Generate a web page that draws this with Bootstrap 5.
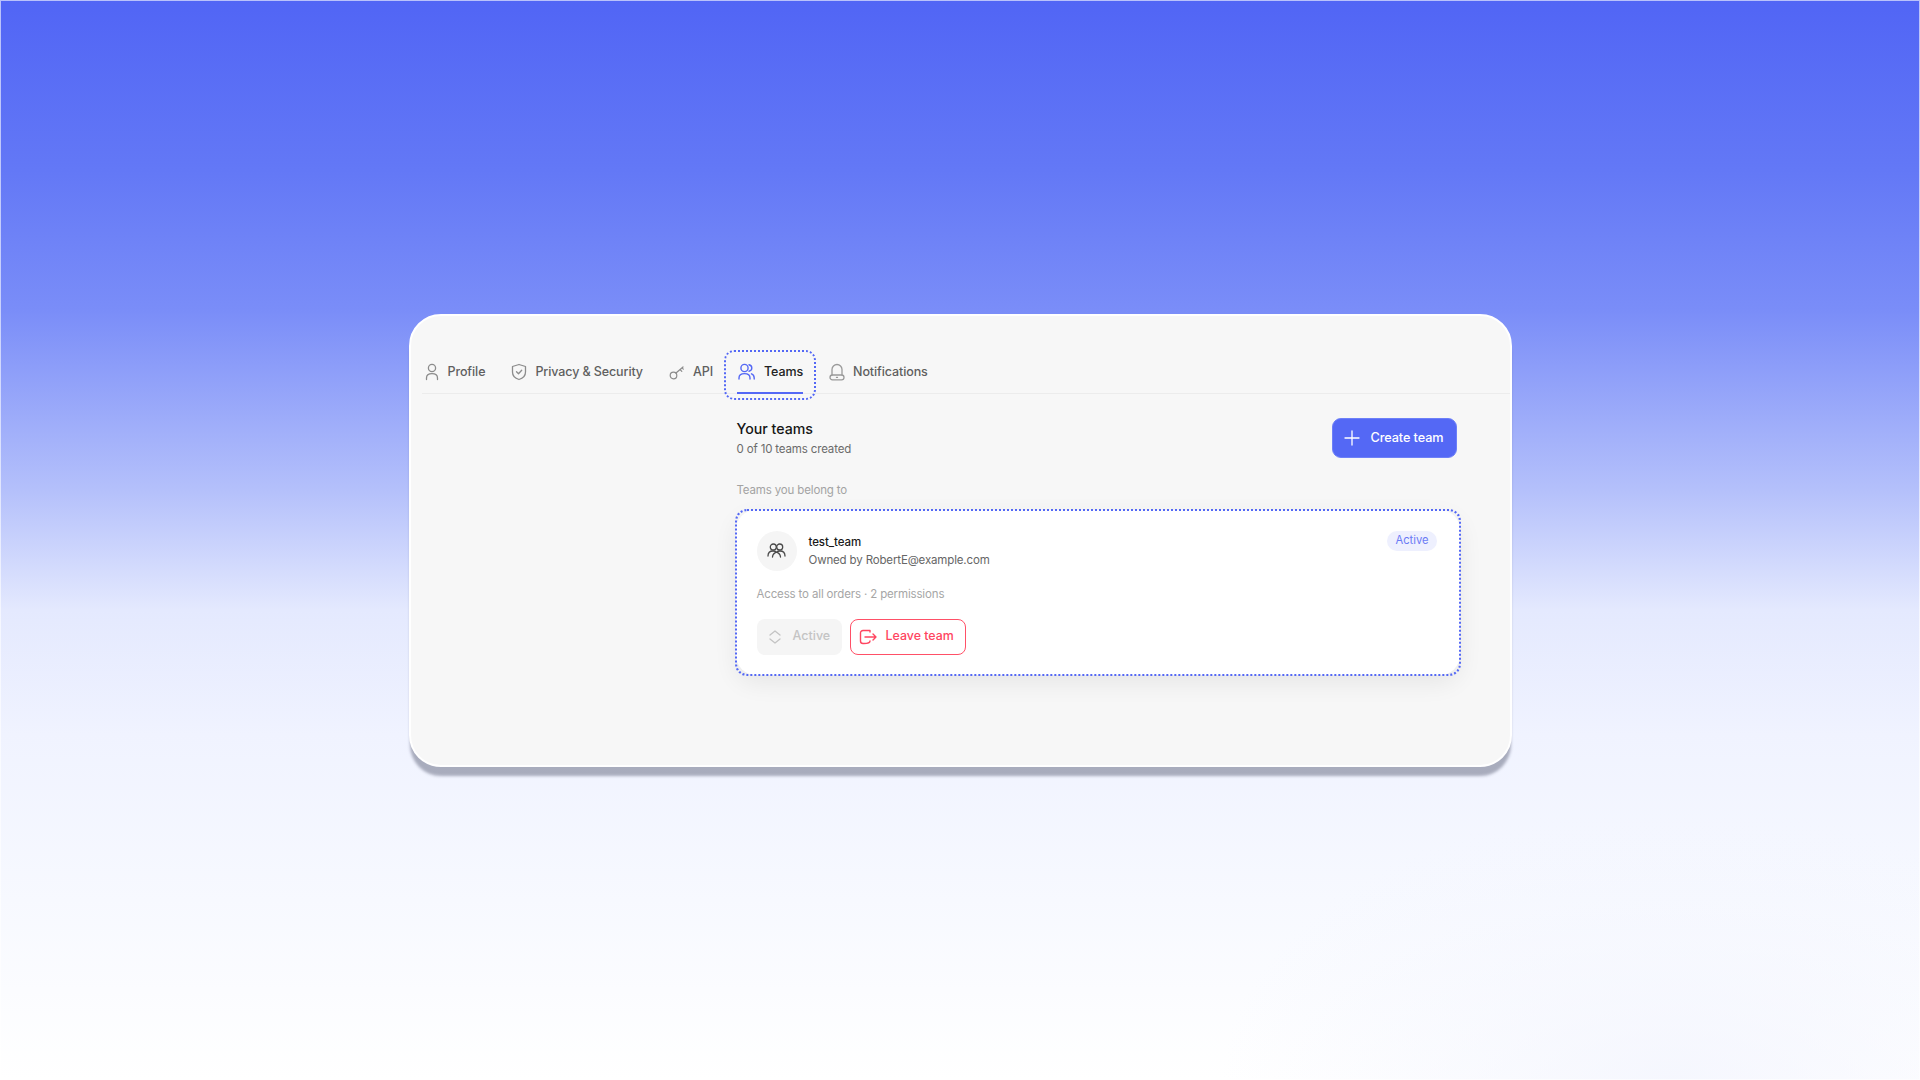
<!DOCTYPE html>
<html lang="en">
<head>
    <meta charset="UTF-8">
    <meta name="viewport" content="width=device-width, initial-scale=1.0">
    <title>Teams settings</title>
    <link href="https://cdn.jsdelivr.net/npm/bootstrap@5.3.0/dist/css/bootstrap.min.css" rel="stylesheet">
    <style>
        html, body { height: 100%; }
        body {
            font-family: Inter, "Noto Sans", sans-serif;
            background:
                radial-gradient(ellipse 450px 280px at 1672px 1080px, rgba(243, 245, 254, .8), rgba(243, 245, 254, 0)),
                linear-gradient(180deg, #5165f5 0px, #6378f6 170px, #7a8df8 310px, #b4c0fb 490px, #e4e9fe 610px, #f0f3ff 735px, #f7f9ff 900px, #ffffff 1080px);
            background-origin: border-box;
            border: 1px solid rgba(255, 255, 255, .6);
            overflow: hidden;
        }
        .page-wrap { padding-top: 313px; }
        .settings-panel {
            width: 1103px;
            height: 453px;
            background: #f7f7f7;
            border: 2px solid #fff;
            border-radius: 32px;
            box-shadow: 0 10px 3px -1px rgba(60, 64, 90, .4);
        }
        .tab-row {
            margin: 32px 0 0 11px;
            padding-left: 2px;
            height: 46px;
            border-bottom: 1px solid #ececec;
        }
        .tab-item {
            height: 45px;
            padding-top: 3px;
            color: #5f5f5f;
            font-size: 12.5px;
            font-weight: 500;
            letter-spacing: -.1px;
            text-decoration: none;
            padding-right: 26px;
        }
        .tab-item svg { flex: none; }
        .tab-api { padding-right: 11px; }
        .tab-active {
            position: relative;
            color: #222;
            padding: 3px 13px 0;
            margin-right: 13px;
            gap: 6.5px !important;
        }
        .tab-active svg { margin-left: 1.5px; }
        .tab-active::before {
            content: "";
            position: absolute;
            left: 0; right: 0; top: 2px; bottom: -7px;
            border: 2px dotted #5468f5;
            border-radius: 10px;
        }
        .tab-active::after {
            content: "";
            position: absolute;
            left: 13px; right: 13px; bottom: -1px;
            height: 2px;
            background: #5468f5;
        }
        .content-col { margin-left: 326px; width: 720px; padding-top: 24px; }
        .section-title { font-size: 14.2px; font-weight: 500; color: #161616; line-height: 20px; margin-top: .5px; }
        .section-sub { font-size: 11.5px; color: #6b6b6b; line-height: 18px; letter-spacing: -.15px; margin-top: 1px; }
        .create-btn {
            width: 125px;
            height: 40px;
            background: #5468f5;
            border: 1px solid #6d80f8;
            border-radius: 9px;
            color: #fff;
            font-size: 12.7px;
            font-weight: 500;
            letter-spacing: -.1px;
            padding-left: 11px;
            gap: 11px;
        }
        .belong-label { font-size: 11.5px; color: #a3a3a3; margin: 23px 0 10.5px; line-height: 18px; letter-spacing: -.15px; }
        .team-card {
            position: relative;
            background: #fff;
            width: 724px;
            height: 165px;
            margin-left: -1px;
            border-radius: 20px;
            padding: 21px 20px 0 21px;
            box-shadow: 0 8px 24px rgba(0, 0, 0, .07);
        }
        .team-card::after {
            content: "";
            position: absolute;
            inset: -1px;
            border: 2px dotted #5468f5;
            border-radius: 12px;
            pointer-events: none;
        }
        .team-avatar { width: 40px; height: 40px; background: #f5f5f5; border-radius: 50%; }
        .team-name { font-size: 11.5px; font-weight: 500; color: #1a1a1a; line-height: 18px; letter-spacing: -.1px; }
        .team-owner { font-size: 11.5px; color: #666; line-height: 18px; letter-spacing: -.15px; }
        .active-pill {
            height: 20px;
            width: 50px;
            margin-right: 2.5px;
            background: #eef0fe;
            color: #6a7af5;
            font-size: 11.2px;
            border-radius: 10px;
        }
        .team-access { font-size: 11.5px; color: #a6a6a6; margin: 14.5px 0 15.5px; line-height: 18px; letter-spacing: -.15px; }
        .btn-active-off {
            width: 85px; height: 36px;
            background: #f5f5f5;
            border: 0;
            border-radius: 8px;
            color: #c4c4c4;
            font-size: 12.5px;
            font-weight: 500;
            padding-left: 11px;
            gap: 11px;
        }
        .btn-leave {
            width: 116px; height: 36px;
            background: #fff;
            border: 1px solid #ff5067;
            border-radius: 8px;
            color: #ff4560;
            font-size: 12.4px;
            font-weight: 500;
            padding-left: 8px;
            gap: 9px;
        }
    </style>
</head>
<body>
    <div class="page-wrap">
        <div class="settings-panel mx-auto">
            <div class="tab-row d-flex align-items-center">
                <a class="tab-item d-flex align-items-center gap-2" href="#">
                    <svg width="16" height="18" viewBox="0 0 16 18" fill="none" stroke="#8c8c8c" stroke-width="1.3" stroke-linecap="round"><circle cx="8" cy="5" r="3.6"/><path d="M2.500 16.500v-1.500c0-2.600 2-4.400 5.500-4.400s5.500 1.800 5.500 4.400v1.500"/></svg>
                    <span>Profile</span>
                </a>
                <a class="tab-item d-flex align-items-center gap-2" href="#">
                    <svg width="16" height="18" viewBox="0 0 16 18" fill="none" stroke="#8c8c8c" stroke-width="1.3" stroke-linecap="round" stroke-linejoin="round"><path d="M8 1.500 14.500 3.500v5.500c0 4-3 6.500-6.500 7.500-3.500-1-6.500-3.500-6.500-7.500V3.500z"/><path d="m5.500 8.800 2 2 3.200-3.600"/></svg>
                    <span>Privacy &amp; Security</span>
                </a>
                <a class="tab-item tab-api d-flex align-items-center gap-2" href="#">
                    <svg width="16" height="16" viewBox="0 0 16 16" fill="none" stroke="#8c8c8c" stroke-width="1.2" stroke-linecap="round"><circle cx="4.500" cy="11.500" r="3.300"/><path d="m7 9 7-6M11 5.500l1.800 1.800M13 3.800l1.300 1.300"/></svg>
                    <span>API</span>
                </a>
                <a class="tab-item tab-active d-flex align-items-center gap-2" href="#">
                    <svg width="19" height="18" viewBox="0 0 19 18" fill="none" stroke="#5468f5" stroke-width="1.4" stroke-linecap="round"><circle cx="6.500" cy="5" r="3.600"/><path d="M1 16v-1c0-2.600 2-4.400 5.500-4.400S12 12.400 12 15v1M11 1.800c1.800.4 2.800 1.700 2.800 3.200S12.800 7.800 11 8.200M13.500 10.800c1.700.7 2.700 2.200 2.700 4.200v1"/></svg>
                    <span>Teams</span>
                </a>
                <a class="tab-item d-flex align-items-center gap-2" href="#">
                    <svg width="16" height="18" viewBox="0 0 16 18" fill="none" stroke="#9a9a9a" stroke-width="1.3" stroke-linecap="round" stroke-linejoin="round"><path d="M3 12V6.500a5 5 0 0 1 10 0V12"/><rect x="1" y="12" width="14" height="4.800" rx="2.400"/><path d="M7.500 14.400h1"/></svg>
                    <span>Notifications</span>
                </a>
            </div>
            <div class="content-col">
                <div class="d-flex justify-content-between align-items-start">
                    <div>
                        <div class="section-title">Your teams</div>
                        <div class="section-sub">0 of 10 teams created</div>
                    </div>
                    <button class="create-btn d-flex align-items-center" type="button">
                        <svg width="16" height="16" viewBox="0 0 16 16" fill="none" stroke="#fff" stroke-width="1.3" stroke-linecap="round"><path d="M8 1v14M1 8h14"/></svg>
                        <span>Create team</span>
                    </button>
                </div>
                <div class="belong-label">Teams you belong to</div>
                <div class="team-card">
                    <div class="d-flex justify-content-between align-items-start">
                        <div class="d-flex align-items-center gap-2">
                            <div class="team-avatar d-flex align-items-center justify-content-center me-1">
                                <svg width="19" height="15" viewBox="0 0 19 15" fill="none" stroke="#4a4a4a" stroke-width="1.3" stroke-linecap="round"><circle cx="6.300" cy="4" r="3"/><circle cx="12.700" cy="4" r="3"/><path d="M1 13c0-3.200 1.800-5 5-5 1.500 0 2.700.4 3.500 1.200C10.300 8.400 11.500 8 13 8c3.200 0 5 1.800 5 5M5.500 14c.2-2.300 1.700-4 4-4.800 2.300.8 3.800 2.500 4 4.800"/></svg>
                            </div>
                            <div>
                                <div class="team-name">test_team</div>
                                <div class="team-owner">Owned by RobertE@example.com</div>
                            </div>
                        </div>
                        <span class="active-pill d-flex align-items-center justify-content-center">Active</span>
                    </div>
                    <div class="team-access">Access to all orders · 2 permissions</div>
                    <div class="d-flex gap-2">
                        <button class="btn-active-off d-flex align-items-center" type="button">
                            <svg width="14" height="14" viewBox="0 0 14 14" fill="none" stroke="#c4c4c4" stroke-width="1.3" stroke-linecap="round" stroke-linejoin="round"><path d="M2 5 7 1l5 4M2 9l5 4 5-4"/></svg>
                            <span>Active</span>
                        </button>
                        <button class="btn-leave d-flex align-items-center" type="button">
                            <svg width="18" height="16" viewBox="0 0 18 16" fill="none" stroke="#ff4560" stroke-width="1.4" stroke-linecap="round" stroke-linejoin="round"><path d="M11 3V1.500H4C2.500 1.500 1.500 2.500 1.500 4v8c0 1.500 1 2.500 2.500 2.500h1c3 0 6-1 6-2.500M6 8h11M14 5l3 3-3 3"/></svg>
                            <span>Leave team</span>
                        </button>
                    </div>
                </div>
            </div>
        </div>
    </div>
    <script src="https://cdn.jsdelivr.net/npm/bootstrap@5.3.0/dist/js/bootstrap.bundle.min.js"></script>
</body>
</html>
